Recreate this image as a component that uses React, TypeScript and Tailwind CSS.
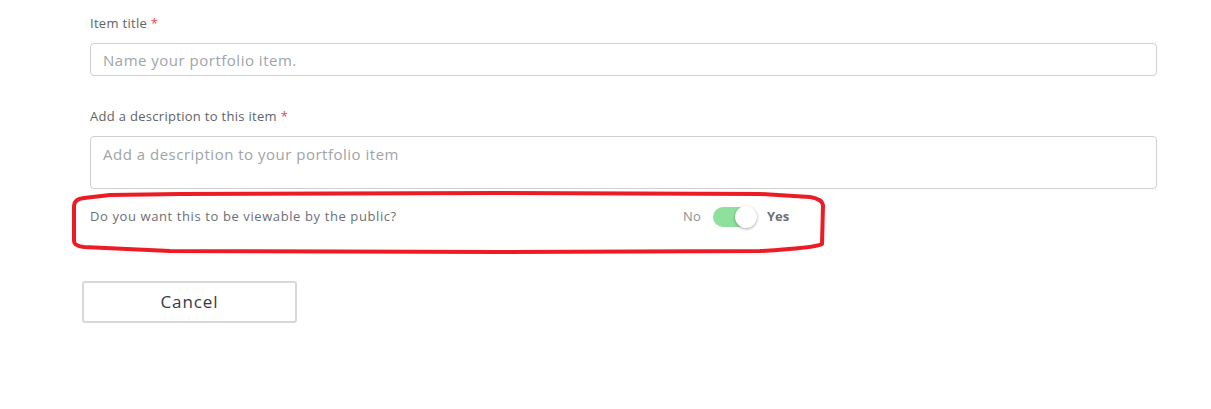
import React from "react";

export default function App() {
  return (
    <div
      className="relative w-[1211px] h-[409px] bg-white overflow-hidden"
      style={{ fontFamily: "'Open Sans', 'Noto Sans', sans-serif" }}
    >
      <div className="pl-[82px] pt-[14px]">
        <div className="pl-2 w-[1075px]">
          <label className="block text-[13px] leading-[18px] tracking-[0.3px] text-[#5f6368]">
            Item title <span className="text-[#e5484d]">*</span>
          </label>
          <input
            className="mt-[11px] block w-[1067px] h-[33px] rounded-[4px] border border-[#cfcfcf] px-3 text-[15px] tracking-[0.5px] text-[#333] placeholder:text-[#a0a4a8] outline-none"
            placeholder="Name your portfolio item."
          />
          <label className="mt-[31px] block text-[13px] leading-[18px] tracking-[0.3px] text-[#5f6368]">
            Add a description to this item <span className="text-[#e5484d]">*</span>
          </label>
          <textarea
            className="mt-[11px] block w-[1067px] h-[53px] resize-none rounded-[4px] border border-[#cfcfcf] px-3 pt-[6px] text-[15px] leading-[22px] tracking-[0.5px] text-[#333] placeholder:text-[#a0a4a8] outline-none"
            placeholder="Add a description to your portfolio item"
          />
          <div className="mt-[18px] flex items-center w-[700px] h-[20px]">
            <span className="text-[13px] tracking-[0.6px] text-[#6b7075] w-[593px]">
              Do you want this to be viewable by the public?
            </span>
            <span className="text-[13px] tracking-[0.3px] text-[#8a8f94] w-[30px]">No</span>
            <div className="relative w-[44px] h-[20px] rounded-full bg-[#8fe09c]">
              <div className="absolute right-0 top-[-1px] w-[22px] h-[22px] rounded-full bg-white shadow-[0_1px_3px_rgba(0,0,0,0.35)]" />
            </div>
            <span className="ml-[10px] text-[13px] font-bold text-[#6b7075]">Yes</span>
          </div>
        </div>
        <button className="mt-[54px] block w-[215px] h-[42px] rounded-[3px] border-2 border-[#d5d8dc] bg-white text-[17px] tracking-[0.9px] text-[#333a44]">
          Cancel
        </button>
      </div>
      <svg className="absolute left-0 top-0 pointer-events-none" width="1211" height="409">
        <path
          d="M 84,198 Q 74,199 74,206 L 74,241 Q 74,246 84,247 L 170,251 L 500,252 L 760,251 Q 815,248 822,244 L 823,205 Q 822,199 810,197 L 760,194 L 500,193 L 180,194 L 110,195 Z"
          fill="none"
          stroke="#ed1c24"
          strokeWidth="4"
          strokeLinejoin="round"
        />
      </svg>
    </div>
  );
}
